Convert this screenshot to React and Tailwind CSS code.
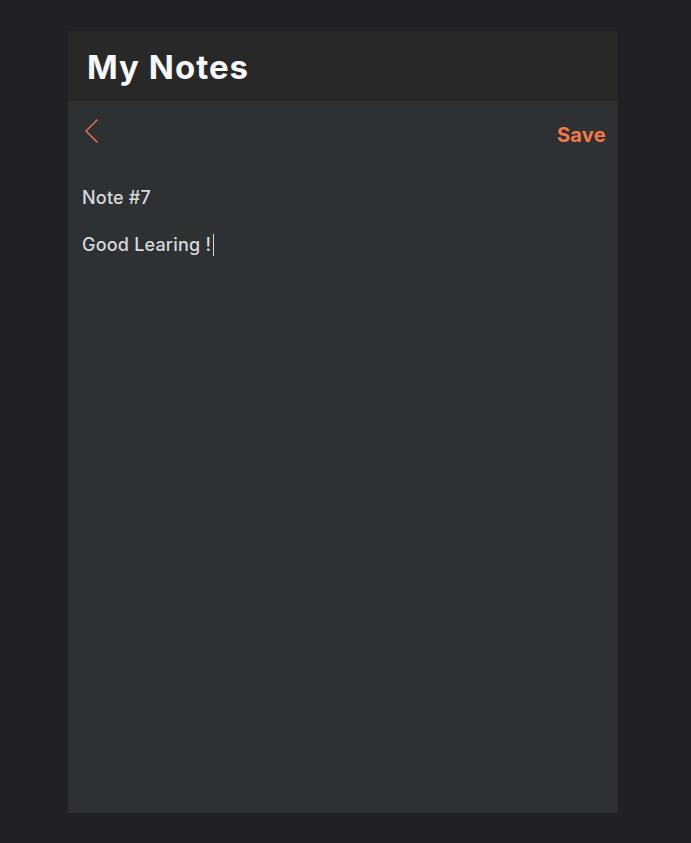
export default function App() {
  return (
    <div className="min-h-screen w-full bg-[#202124] pt-[31px] font-['Inter',sans-serif]">
      <div className="ml-[68px] flex h-[782px] w-[550px] flex-col bg-[#2e3134]">
        <header className="flex h-[70px] items-center bg-[#282829] pl-[19px]">
          <h1 className="mt-[2px] text-[33px] font-bold leading-none tracking-[1px] text-[#f5f7fa]">My Notes</h1>
        </header>
        <div className="flex items-start justify-between pl-[17px] pr-[12px] pt-[18px]">
          <button className="text-[#f2784b]">
            <svg width="14" height="24" viewBox="0 0 14 24" fill="none" stroke="currentColor" strokeWidth="1.4" strokeLinecap="round">
              <path d="M12 1 L1 12 L12 23" />
            </svg>
          </button>
          <button className="mt-[6px] text-[20px] font-bold leading-none tracking-[0.3px] text-[#f2784b]">Save</button>
        </div>
        <div className="flex flex-col gap-[27px] px-[14px] pt-[44px] text-[18px] font-medium leading-none tracking-[0.2px] text-[#d6d8db]">
          <p>Note #7</p>
          <p className="flex items-center">
            Good Learing !<span className="ml-[2px] inline-block h-[22px] w-px bg-[#d6d8db]" />
          </p>
        </div>
      </div>
    </div>
  );
}
